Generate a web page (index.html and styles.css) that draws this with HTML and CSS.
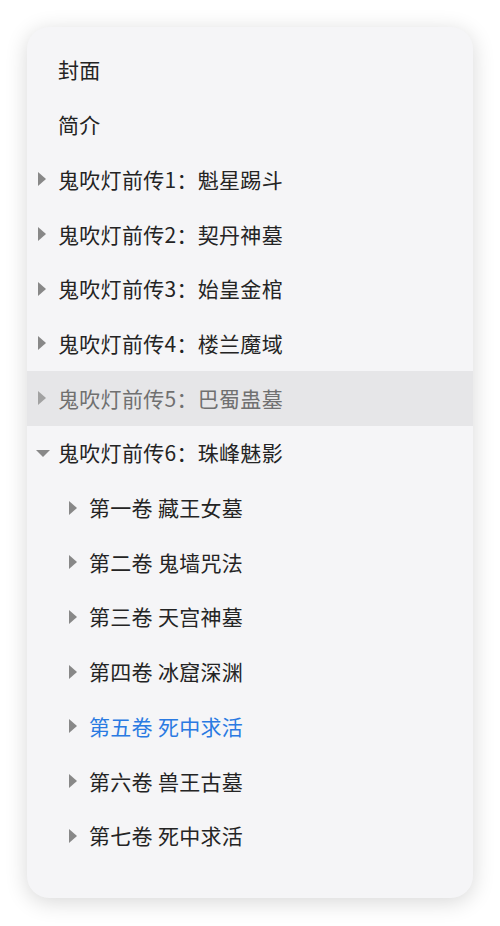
FILE: index.html
```html
<!DOCTYPE html>
<html lang="zh">
<head>
<meta charset="utf-8">
<title>目录</title>
<link rel="stylesheet" href="styles.css">
</head>
<body>
<nav class="toc">
  <ul class="list">
    <li class="row"><span class="label">封面</span></li>
    <li class="row"><span class="label">简介</span></li>
    <li class="row"><span class="tri right"></span><span class="label">鬼吹灯前传1：魁星踢斗</span></li>
    <li class="row"><span class="tri right"></span><span class="label">鬼吹灯前传2：契丹神墓</span></li>
    <li class="row"><span class="tri right"></span><span class="label">鬼吹灯前传3：始皇金棺</span></li>
    <li class="row"><span class="tri right"></span><span class="label">鬼吹灯前传4：楼兰魔域</span></li>
    <li class="row hover"><span class="tri right"></span><span class="label">鬼吹灯前传5：巴蜀蛊墓</span></li>
    <li class="row"><span class="tri down"></span><span class="label">鬼吹灯前传6：珠峰魅影</span></li>
    <li class="row sub"><span class="tri right"></span><span class="label">第一卷 藏王女墓</span></li>
    <li class="row sub"><span class="tri right"></span><span class="label">第二卷 鬼墙咒法</span></li>
    <li class="row sub"><span class="tri right"></span><span class="label">第三卷 天宫神墓</span></li>
    <li class="row sub"><span class="tri right"></span><span class="label">第四卷 冰窟深渊</span></li>
    <li class="row sub active"><span class="tri right"></span><span class="label">第五卷 死中求活</span></li>
    <li class="row sub"><span class="tri right"></span><span class="label">第六卷 兽王古墓</span></li>
    <li class="row sub"><span class="tri right"></span><span class="label">第七卷 死中求活</span></li>
  </ul>
</nav>
</body>
</html>
```
FILE: styles.css
```css
html, body {
  margin: 0;
  padding: 0;
  background: #ffffff;
}
body {
  width: 500px;
  height: 926px;
  padding: 27px 27px 0 27px;
  box-sizing: border-box;
  font-family: "Noto Sans CJK SC", "Noto Sans", "Liberation Sans", sans-serif;
}
.toc {
  width: 446px;
  height: 871px;
  background: #f5f5f7;
  border-radius: 22px;
  box-shadow: 0 4px 22px rgba(0, 0, 0, 0.16);
  padding-top: 15.6px;
  box-sizing: border-box;
  overflow: hidden;
}
.list {
  list-style: none;
  margin: 0;
  padding: 0;
}
.row {
  height: 54.71px;
  display: flex;
  align-items: center;
  padding-left: 31px;
  position: relative;
  color: #242424;
  font-size: 21px;
  line-height: 1;
}
.row.sub {
  padding-left: 62px;
}
.row.hover {
  background: #e6e6e8;
  color: #707070;
}
.row.active {
  color: #2a7ae2;
}
.label {
  display: block;
  letter-spacing: 0.3px;
}
.tri {
  position: absolute;
  width: 0;
  height: 0;
}
.tri.right {
  left: 11px;
  top: 50%;
  margin-top: -7px;
  border-top: 7px solid transparent;
  border-bottom: 7px solid transparent;
  border-left: 8px solid #888888;
}
.row.sub .tri.right {
  left: 42px;
}
.row.hover .tri.right {
  border-left-color: #a2a2a2;
}
.tri.down {
  left: 9px;
  top: 50%;
  margin-top: -3px;
  border-left: 7px solid transparent;
  border-right: 7px solid transparent;
  border-top: 7px solid #888888;
}
```
